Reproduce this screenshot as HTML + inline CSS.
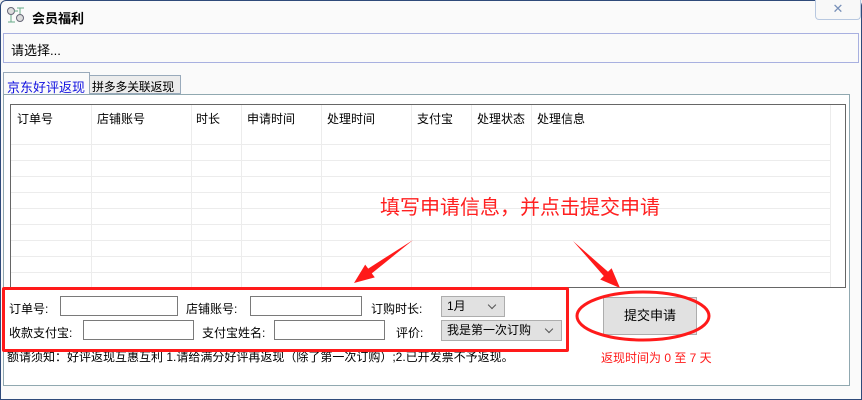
<!DOCTYPE html>
<html><head><meta charset="utf-8"><style>
*{margin:0;padding:0;box-sizing:border-box}
body{width:862px;height:400px;overflow:hidden;background:#f0f0f0;font-family:"Liberation Sans","Noto Sans CJK SC",sans-serif;font-size:12px;color:#000;position:relative}
.a{position:absolute}
.win{left:0;top:0;width:862px;height:400px;border:1px solid #2f4a7a;border-radius:6px 6px 0 0;background:#fafafa}
.inp{position:absolute;background:#fff;border:1px solid #7a7a7a;height:20px}
.sel{position:absolute;background:#e1e1e1;border:1px solid #adadad;height:21px;padding-left:5px;line-height:19px;font-size:12px}
.sel::after{content:"";position:absolute;right:9px;top:5px;width:5px;height:5px;border-right:1px solid #555;border-bottom:1px solid #555;transform:rotate(45deg)}
.hd{position:absolute;top:110px;font-size:12px}
.vl{position:absolute;top:105px;width:1px;height:182px;background:#ececec}
.hl{position:absolute;left:11px;width:819px;height:1px;background:#ececec}
</style></head><body>
<div class="a win"></div>
<svg class="a" style="left:6px;top:6px" width="20" height="18"><circle cx="5" cy="5" r="3.5" fill="#ddd" stroke="#667"/><circle cx="14" cy="12" r="3.5" fill="#ddd" stroke="#667"/><path d="M5 9V16M2 16H9M14 8V2M11 2H18M8 5H12" stroke="#6a8" fill="none"/></svg>
<div class="a" style="left:32px;top:8px;font-weight:bold;font-size:13px">会员福利</div>
<div class="a" style="left:815px;top:0;width:46px;height:20px;border:1px solid #b8c8e0;border-top:none;border-radius:0 0 4px 4px;background:#f8f8f8;color:#7890b8;text-align:center;font-size:13px;line-height:18px">✕</div>
<div class="a" style="left:3px;top:33px;width:856px;height:30px;border:1px solid #a8b0e0;background:#fafafa"></div>
<div class="a" style="left:11px;top:40px;font-size:13px">请选择...</div>
<div class="a" style="left:3px;top:72px;width:87px;height:24px;border:1px solid #9ab;border-bottom:none;background:#fafafa"></div>
<div class="a" style="left:7px;top:77px;color:#1010e0;font-size:13px">京东好评返现</div>
<div class="a" style="left:89px;top:75px;width:92px;height:19px;border:1px solid #9ab;background:#ececec"></div>
<div class="a" style="left:92px;top:78px;font-size:12px;letter-spacing:-0.3px">拼多多关联返现</div>
<div class="a" style="left:3px;top:94px;width:847px;height:292px;border:1px solid #90a8b0;background:#fff"></div>
<div class="a" style="left:10px;top:104px;width:836px;height:184px;border:1px solid #666;background:#fff"></div>
<div class="vl" style="left:91px"></div><div class="vl" style="left:191px"></div><div class="vl" style="left:241px"></div><div class="vl" style="left:321px"></div><div class="vl" style="left:411px"></div><div class="vl" style="left:471px"></div><div class="vl" style="left:531px"></div><div class="vl" style="left:830px"></div>
<div class="hl" style="top:144px"></div><div class="hl" style="top:160px"></div><div class="hl" style="top:176px"></div><div class="hl" style="top:192px"></div><div class="hl" style="top:208px"></div><div class="hl" style="top:224px"></div><div class="hl" style="top:240px"></div><div class="hl" style="top:256px"></div><div class="hl" style="top:272px"></div>
<div class="hd" style="left:17px">订单号</div><div class="hd" style="left:97px">店铺账号</div><div class="hd" style="left:196px">时长</div><div class="hd" style="left:247px">申请时间</div><div class="hd" style="left:327px">处理时间</div><div class="hd" style="left:417px">支付宝</div><div class="hd" style="left:477px">处理状态</div><div class="hd" style="left:537px">处理信息</div>
<div class="a" style="left:9px;top:300px">订单号:</div><div class="inp" style="left:60px;top:296px;width:118px"></div>
<div class="a" style="left:186px;top:300px">店铺账号:</div><div class="inp" style="left:250px;top:296px;width:112px"></div>
<div class="a" style="left:371px;top:300px">订购时长:</div><div class="sel" style="left:441px;top:296px;width:64px">1月</div>
<div class="a" style="left:9px;top:324px">收款支付宝:</div><div class="inp" style="left:83px;top:320px;width:111px"></div>
<div class="a" style="left:202px;top:324px">支付宝姓名:</div><div class="inp" style="left:274px;top:320px;width:111px"></div>
<div class="a" style="left:396px;top:324px">评价:</div><div class="sel" style="left:441px;top:320px;width:121px">我是第一次订购</div>
<div class="a" style="left:7px;top:348px;width:540px;white-space:nowrap;font-size:12px">额请须知：好评返现互惠互利 1.请给满分好评再返现（除了第一次订购）;2.已开发票不予返现。</div>
<div class="a" style="left:2px;top:287px;width:567px;height:65px;border:3px solid #ff1a1a;border-radius:2px"></div>
<div class="a" style="left:603px;top:297px;width:94px;height:38px;background:#e1e1e1;border:1px solid #adadad;text-align:center;line-height:36px;font-size:13px">提交申请</div>
<svg class="a" style="left:0;top:0" width="862" height="400">
<ellipse cx="643" cy="316" rx="66" ry="24" fill="none" stroke="#ff1a1a" stroke-width="3"/>
<polygon points="413,240 371.8,273.4 374.8,277.4 354,283 365.2,264.6 368.2,268.6" fill="#ff1a1a"/>
<polygon points="573,241 603.8,276 600.2,279.5 620,288 611.6,268.2 608,271.8" fill="#ff1a1a"/>
</svg>
<div class="a" style="left:380px;top:191px;color:#ff2020;font-size:20px">填写申请信息，并点击提交申请</div>
<div class="a" style="left:601px;top:349px;color:#ff1a1a;font-size:12px;white-space:pre">返现时间为 0 至 7 天</div>
</body></html>
